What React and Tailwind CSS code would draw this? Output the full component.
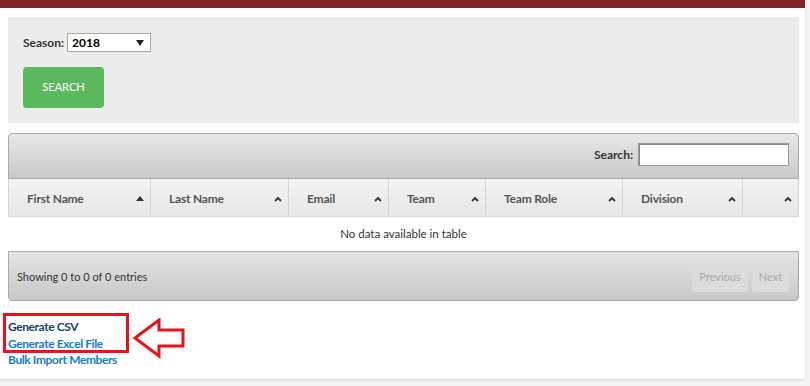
import { useState } from 'react';

const columns = [
  { label: 'First Name', w: 'w-[142px]', active: true },
  { label: 'Last Name', w: 'w-[138px]' },
  { label: 'Email', w: 'w-[100px]' },
  { label: 'Team', w: 'w-[97px]' },
  { label: 'Team Role', w: 'w-[137px]' },
  { label: 'Division', w: 'w-[120px]' },
  { label: '', w: 'flex-1' },
];

function SortIcon({ active }) {
  if (active) {
    return (
      <svg width="8" height="5" viewBox="0 0 8 5" className="shrink-0">
        <polygon points="4,0 8,5 0,5" fill="#333" />
      </svg>
    );
  }
  return (
    <svg width="8" height="6" viewBox="0 0 8 6" className="shrink-0">
      <polyline points="1,5 4,2 7,5" fill="none" stroke="#333" strokeWidth="1.8" />
    </svg>
  );
}

export default function App() {
  const [season, setSeason] = useState('2018');
  const [query, setQuery] = useState('');

  return (
    <div className="w-[810px] h-[386px] bg-[#f4f4f4] font-['Lato',sans-serif] text-[12px] text-[#333] overflow-hidden">
      <div className="bg-white w-[805px] h-[379px] shadow-[0_1px_3px_rgba(0,0,0,0.12)]">
        <div className="h-[8px] bg-[#822428]" />
        <div className="px-[8px] pt-[9px]">
          <div className="w-[791px] h-[106px] bg-[#ececec] pl-[15px] pt-[16px]">
            <div className="flex items-center gap-[3px]">
              <span className="font-bold text-[12px] text-[#333]">Season:</span>
              <div className="w-[84px] h-[19px] bg-white border border-[#a9a9a9] flex items-center justify-between pl-[4px] pr-[6px]">
                <span className="font-bold text-[12px] text-black">{season}</span>
                <svg width="8" height="6" viewBox="0 0 8 6">
                  <polygon points="0,0 8,0 4,6" fill="#222" />
                </svg>
              </div>
            </div>
            <button
              onClick={() => setSeason('2018')}
              className="mt-[15px] w-[81px] h-[41px] rounded-[4px] bg-[#5cb85c] text-white text-[11px] uppercase"
            >
              Search
            </button>
          </div>

          <div className="mt-[10px] w-[791px]">
            <div className="h-[46px] border border-[#aaa] rounded-t-[4px] bg-gradient-to-b from-[#e8e8e8] to-[#c9c9c9] flex items-center justify-end pr-[9px] gap-[5px] pb-[3px]">
              <span className="font-bold text-[12px] text-[#333]">Search:</span>
              <input
                value={query}
                onChange={(e) => setQuery(e.target.value)}
                className="w-[151px] h-[23px] bg-white border border-[#999] shadow-[inset_1px_1px_0_#888] outline-none px-1"
              />
            </div>
            <div className="flex h-[38px] border-x border-b border-[#d4d4d4] bg-gradient-to-b from-[#f4f4f4] to-[#e6e6e6]">
              {columns.map((c, i) => (
                <div
                  key={i}
                  className={`${c.w} flex items-center justify-between pl-[18px] pr-[6px] pt-[2px] ${i < columns.length - 1 ? 'border-r border-[#d4d4d4]' : ''}`}
                >
                  <span className="font-bold text-[12px] tracking-[-0.2px] text-[#555]">{c.label}</span>
                  <SortIcon active={c.active} />
                </div>
              ))}
            </div>
            <div className="h-[34px] flex items-center justify-center text-[11.5px] text-[#333]">
              No data available in table
            </div>
            <div className="h-[50px] border border-[#aaa] rounded-b-[4px] bg-gradient-to-b from-[#e4e4e4] to-[#c9c9c9] flex items-center justify-between pl-[8px] pr-[9px] pt-[3px]">
              <span className="text-[11px] text-[#333]">Showing 0 to 0 of 0 entries</span>
              <div className="flex gap-[4px]">
                <span className="h-[28px] w-[56px] flex items-center justify-center rounded-[2px] bg-[#dcdcdc] text-[#a8a8a8] text-[11px]">Previous</span>
                <span className="h-[28px] w-[37px] flex items-center justify-center rounded-[2px] bg-[#dcdcdc] text-[#a8a8a8] text-[11px]">Next</span>
              </div>
            </div>
          </div>
        </div>

        <div className="mt-[12px] pl-[3px]">
          <div className="flex items-start">
            <div className="w-[126px] h-[40px] border-[3px] border-[#e8141c] pl-[2px] pt-[2px]">
              <div className="font-bold text-[12px] tracking-[-0.4px] leading-[17px] text-[#1c3f6e]">Generate CSV</div>
              <div className="font-bold text-[12px] tracking-[-0.4px] leading-[17px] text-[#1b7bc8]">Generate Excel File</div>
            </div>
            <svg width="56" height="42" viewBox="0 0 56 42" className="ml-[3px] mt-[5px]">
              <polygon
                points="3,20 27,2 27,12 51,12 51,28 27,28 27,38"
                fill="none"
                stroke="#e8141c"
                strokeWidth="3"
              />
            </svg>
          </div>
          <div className="pl-[5px] -mt-[9px] font-bold text-[12px] tracking-[-0.4px] leading-[17px] text-[#1b7bc8]">Bulk Import Members</div>
        </div>
      </div>
    </div>
  );
}
